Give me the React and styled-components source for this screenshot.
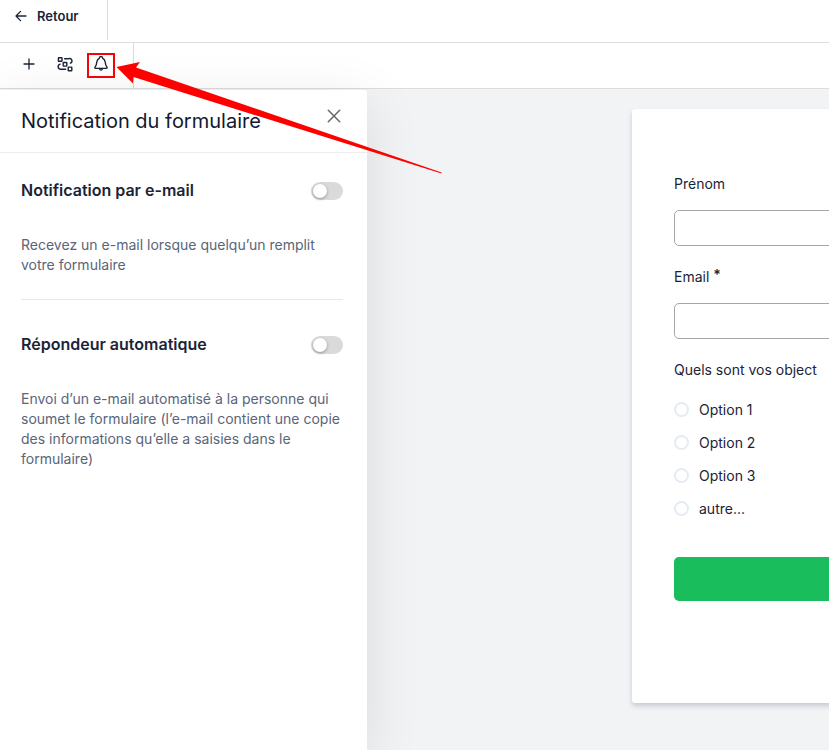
import React, { useState } from 'react';
import styled, { createGlobalStyle } from 'styled-components';

const GlobalStyle = createGlobalStyle`
    *{
        box-sizing: border-box;
    }

    body{
        margin: 0;
        background: #f2f3f5;
        color: #1b2437;
        font-family: Inter, "Liberation Sans", sans-serif;
        font-size: 14px;
        line-height: 20px;
    }

    h1, h2, p, fieldset, legend{
        margin: 0;
        padding: 0;
        border: 0;
    }

    button, input{
        font: inherit;
        color: inherit;
    }
`;

const Page = styled.div`
    position: relative;
    display: flex;
    flex-direction: column;
    min-height: 100vh;
    overflow: hidden;
`;

const Header = styled.header`
    display: flex;
    height: 43px;
    padding-bottom: 2px;
    background: #fff;
    border-bottom: 1px solid #dedede;
`;

const BackLink = styled.a`
    display: flex;
    align-items: center;
    gap: 9px;
    width: 108px;
    padding: 0 0 8px 14px;
    border-right: 1px solid #dedede;
    color: #1b2437;
    font-size: 13px;
    font-weight: 600;
    text-decoration: none;
`;

const Toolbar = styled.div`
    display: flex;
    height: 46px;
    background: #fff;
    border-bottom: 1px solid #dcdcdc;
`;

const ToolGroup = styled.div`
    display: flex;
    align-items: center;
    gap: 8px;
    width: 134px;
    padding-left: 15px;
    border-right: 1px solid #dcdcdc;
`;

const ToolButton = styled.button`
    display: flex;
    align-items: flex-start;
    justify-content: center;
    width: 28px;
    height: 25px;
    padding: 1px 0 0;
    border: 2px solid ${props => (props.$marked ? '#f80408' : 'transparent')};
    background: none;
    cursor: pointer;
`;

const Workspace = styled.main`
    display: flex;
    flex: 1;
    padding-top: 1px;
`;

const Panel = styled.aside`
    position: relative;
    flex: none;
    width: 367px;
    background: #fff;
    border-radius: 0 3px 0 0;
    box-shadow: 0 12px 56px rgba(0,0,0,.1);
`;

const PanelHeader = styled.div`
    display: flex;
    align-items: flex-start;
    justify-content: space-between;
    height: 63px;
    padding: 18px 24px 0 21px;
    border-bottom: 1px solid #ebebf2;
`;

const PanelTitle = styled.h1`
    font-size: 20px;
    font-weight: 400;
    line-height: 26px;
    color: #111a2e;
`;

const CloseButton = styled.button`
    display: flex;
    padding: 0;
    border: 0;
    background: none;
    cursor: pointer;
`;

const PanelBody = styled.div`
    padding: 0 24px 0 21px;
`;

const Setting = styled.section`
    padding: 25px 0 24px;

    & + &{
        padding-top: 32px;
        border-top: 1px solid #e6e7ea;
    }
`;

const SettingHead = styled.label`
    display: flex;
    align-items: center;
    justify-content: space-between;
    margin-bottom: 32px;
    font-size: 16px;
    font-weight: 600;
    line-height: 25px;
    cursor: pointer;
`;

const SettingText = styled.p`
    color: #5a6579;
`;

const Switch = styled.input`
    appearance: none;
    display: flex;
    align-items: center;
    width: 32px;
    height: 18px;
    margin: 0;
    padding: 0 2px;
    border-radius: 9px;
    background: #dadada;
    cursor: pointer;

    &::before{
        content: "";
        width: 14px;
        height: 14px;
        border-radius: 50%;
        background: #fff;
        box-shadow: 0 1px 3px rgba(0,0,0,.35);
    }

    &:checked{
        justify-content: flex-end;
        background: #19bd5b;
    }
`;

const Canvas = styled.div`
    flex: 1;
    min-width: 0;
    padding: 19px 0 47px 265px;
    overflow: hidden;
`;

const FormCard = styled.form`
    width: 480px;
    padding: 65px 42px 102px;
    background: #fff;
    border-radius: 3px;
    box-shadow: 0 3px 5px rgba(30,40,80,.2);
`;

const Field = styled.label`
    display: block;
    margin-bottom: 21px;
`;

const Required = styled.span`
    font-weight: 600;
    line-height: 1;
    vertical-align: 2px;
`;

const TextInput = styled.input`
    display: block;
    width: 100%;
    height: 36px;
    margin-top: 16px;
    padding: 0 12px;
    border: 1px solid #a6a6a6;
    border-radius: 5px;
    background: #fff;
`;

const Choices = styled.fieldset`
    display: grid;
    gap: 13px;

    legend{
        margin-bottom: 20px;
    }
`;

const Choice = styled.label`
    display: flex;
    align-items: flex-start;
    gap: 10px;
`;

const Radio = styled.input`
    appearance: none;
    width: 15px;
    height: 15px;
    margin: 2px 0 0;
    border: 2px solid #e4ebf2;
    border-radius: 50%;
    background: #fff;

    &:checked{
        border: 4px solid #19bd5b;
    }
`;

const SubmitButton = styled.button`
    display: block;
    width: 100%;
    height: 44px;
    margin-top: 38px;
    border: 0;
    border-radius: 5px;
    background: #19bd5b;
    cursor: pointer;
`;

// drawn over the toolbar, the panel and the canvas
const PointerArrow = styled.svg`
    position: absolute;
    top: 60px;
    left: 115px;
    pointer-events: none;
`;

const stroke = { fill: 'none', stroke: '#1b2437', strokeLinecap: 'round', strokeLinejoin: 'round' };

const BackIcon = () => (
    <svg width="14" height="14" viewBox="0 0 14 14" {...stroke} strokeWidth="1.3">
        <path d="M12 7H2.2M6.6 2.4L2 7l4.6 4.6" />
    </svg>
);

const PlusIcon = () => (
    <svg width="16" height="16" viewBox="0 0 16 16" {...stroke} strokeWidth="1.3">
        <path d="M8 3v10M3 8h10" />
    </svg>
);

const FlowIcon = () => (
    <svg width="16" height="16" viewBox="0 0 16 16" {...stroke} strokeWidth="1.4">
        <rect x="1.4" y="1.700" width="3.600" height="3.600" rx=".5" />
        <rect x="6.200" y="6.500" width="3.600" height="3.600" rx=".5" />
        <rect x="11.200" y="11.100" width="3.600" height="3.600" rx=".5" />
        <path d="M7.600 2.700H11.600a2.300 2.300 0 0 1 1.900 4.500M3.100 8.100a2.600 2.600 0 0 0 .3 5.100H8.600" />
    </svg>
);

const BellIcon = () => (
    <svg width="16" height="16" viewBox="0 0 16 16" {...stroke} strokeWidth="1.4">
        <path d="M6.300 2.300a1.700 1.700 0 0 1 3.400 0C11.300 3 12 4.300 12.200 6c.2 2.600.4 3.300 1.700 5.100.5.700.2 1.300-.5 1.300H2.600c-.7 0-1-.6-.5-1.300C3.400 9.300 3.600 8.600 3.800 6 4 4.300 4.700 3 6.300 2.300z" />
        <path d="M6.500 12.500c.2 1.200.7 1.600 1.500 1.600s1.300-.4 1.500-1.600" />
    </svg>
);

const CloseIcon = () => (
    <svg width="18" height="16" viewBox="0 0 18 16" {...stroke} stroke="#666" strokeWidth="1.5">
        <path d="M3.300 2.300l11.400 11.400M14.700 2.300L3.300 13.700" />
    </svg>
);

const settings = [
    {
        id: 'email',
        title: 'Notification par e-mail',
        text: 'Recevez un e-mail lorsque quelqu’un remplit votre formulaire',
    },
    {
        id: 'auto',
        title: 'Répondeur automatique',
        text: 'Envoi d’un e-mail automatisé à la personne qui soumet le formulaire (l’e-mail contient une copie des informations qu’elle a saisies dans le formulaire)',
    },
];

const options = ['Option 1', 'Option 2', 'Option 3', 'autre...'];

function App() {
    const [enabled, setEnabled] = useState({});

    return (
        <Page>
            <GlobalStyle />
            <Header>
                <BackLink href="#"><BackIcon />Retour</BackLink>
            </Header>
            <Toolbar>
                <ToolGroup>
                    <ToolButton type="button" aria-label="Ajouter"><PlusIcon /></ToolButton>
                    <ToolButton type="button" aria-label="Parcours"><FlowIcon /></ToolButton>
                    <ToolButton type="button" aria-label="Notifications" $marked><BellIcon /></ToolButton>
                </ToolGroup>
            </Toolbar>
            <Workspace>
                <Panel>
                    <PanelHeader>
                        <PanelTitle>Notification du formulaire</PanelTitle>
                        <CloseButton type="button" aria-label="Fermer"><CloseIcon /></CloseButton>
                    </PanelHeader>
                    <PanelBody>
                        {settings.map(item => (
                            <Setting key={item.id}>
                                <SettingHead>
                                    {item.title}
                                    <Switch
                                        type="checkbox"
                                        checked={!!enabled[item.id]}
                                        onChange={e => setEnabled({ ...enabled, [item.id]: e.target.checked })}
                                    />
                                </SettingHead>
                                <SettingText>{item.text}</SettingText>
                            </Setting>
                        ))}
                    </PanelBody>
                </Panel>
                <Canvas>
                    <FormCard onSubmit={e => e.preventDefault()}>
                        <Field>
                            Prénom
                            <TextInput type="text" name="firstname" />
                        </Field>
                        <Field>
                            Email <Required>*</Required>
                            <TextInput type="email" name="email" />
                        </Field>
                        <Choices>
                            <legend>Quels sont vos object</legend>
                            {options.map(option => (
                                <Choice key={option}>
                                    <Radio type="radio" name="goal" value={option} />
                                    {option}
                                </Choice>
                            ))}
                        </Choices>
                        <SubmitButton type="submit" aria-label="Envoyer" />
                    </FormCard>
                </Canvas>
            </Workspace>
            <PointerArrow width="330" height="116" viewBox="115 60 330 116" aria-hidden="true">
                <path d="M116.500 67L140 62l-4 5.500L441.500 172.500v1L133.500 77l-.5 6.500z" fill="#f00" />
            </PointerArrow>
        </Page>
    );
}

export default App;
